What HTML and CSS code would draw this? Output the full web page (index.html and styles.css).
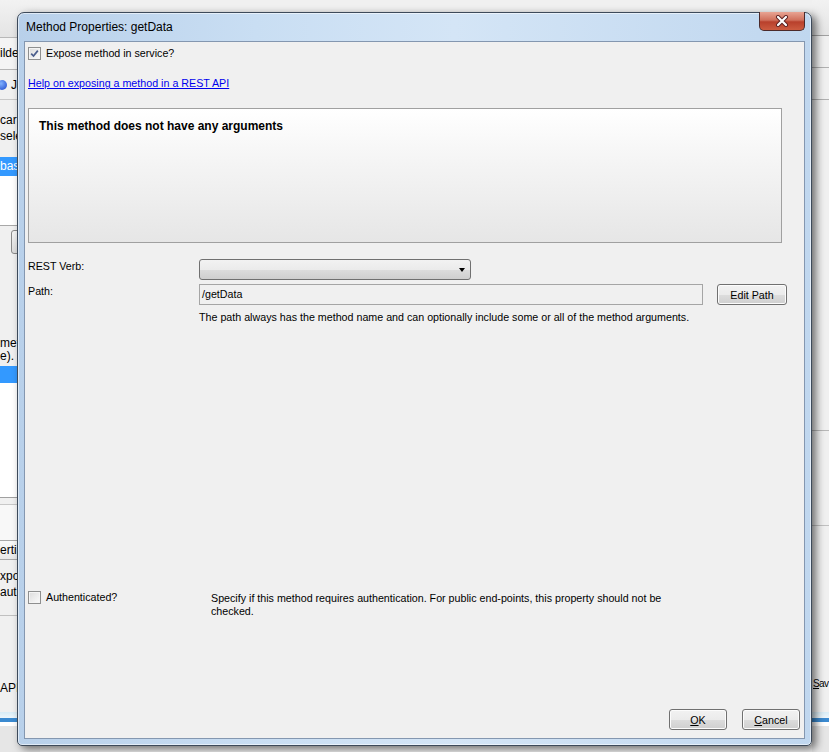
FILE: index.html
```html
<!DOCTYPE html>
<html>
<head>
  <title>Method Properties: getData</title>
  <link rel="stylesheet" href="styles.css">
</head>
<body>
  <div class="desk">
    <!-- main application window behind the dialog -->
    <div class="app">
      <div class="app-left">
        <div class="bg-row bg-head"></div>
        <div class="bg-row bg-tab">ilde</div>
        <div class="bg-row bg-radio"><span class="bg-dot"></span>JS</div>
        <div class="bg-row bg-text">car<br>sele</div>
        <div class="bg-row bg-sel">bas</div>
        <div class="bg-row bg-white"></div>
        <div class="bg-row bg-btn"><span class="bg-btn-edge"></span></div>
        <div class="bg-row bg-meth">meth<br>e).</div>
        <div class="bg-row bg-sel bg-sel2"></div>
        <div class="bg-row bg-white bg-white2"></div>
        <div class="bg-row bg-lines"></div>
        <div class="bg-row bg-hdr">erti</div>
        <div class="bg-row bg-expo">xpo<br>aut</div>
        <div class="bg-row bg-api">API</div>
        <div class="bg-row bg-bar"></div>
      </div>
      <div class="app-mid"></div>
      <div class="app-right">
        <div class="bg-row bg-rhead"></div>
        <div class="bg-row bg-rrow"></div>
        <div class="bg-row bg-rrow"></div>
        <div class="bg-row bg-rfill"></div>
        <div class="bg-row bg-sav"><u>S</u>av</div>
        <div class="bg-row bg-bar"></div>
      </div>
    </div>

    <!-- the dialog window -->
    <div class="dialog">
      <div class="titlebar">
        <span class="title">Method Properties: getData</span>
        <div class="close-btn">
          <svg width="16" height="12" viewBox="0 0 16 12">
            <path d="M4 2 L12 10 M12 2 L4 10" stroke="#5a2020" stroke-width="4" stroke-linecap="round"/>
            <path d="M4 2 L12 10 M12 2 L4 10" stroke="#ffffff" stroke-width="2.2" stroke-linecap="round"/>
          </svg>
        </div>
      </div>

      <div class="client">
        <div class="check-row expose">
          <span class="checkbox">
            <svg width="9" height="9" viewBox="0 0 9 9">
              <path d="M1.2 4.6 L3.5 7 L7.8 1.6" fill="none" stroke="#4a5d8c" stroke-width="1.7"/>
            </svg>
          </span>
          <span>Expose method in service?</span>
        </div>

        <a class="help-link" href="#">Help on exposing a method in a REST API</a>

        <div class="args-box">
          <b>This method does not have any arguments</b>
        </div>

        <div class="form-grid">
          <div class="label">REST Verb:</div>
          <div class="field">
            <div class="combo"><span class="combo-arrow"></span></div>
          </div>

          <div class="label">Path:</div>
          <div class="field path-field">
            <div class="text-input">/getData</div>
            <div class="btn edit-btn">Edit Path</div>
          </div>

          <div></div>
          <div class="hint">The path always has the method name and can optionally include some or all of the method arguments.</div>
        </div>

        <div class="auth-row">
          <div class="check-row auth-check">
            <span class="checkbox"></span>
            <span>Authenticated?</span>
          </div>
          <div class="auth-desc">Specify if this method requires authentication. For public end-points, this property should not be<br>checked.</div>
        </div>

        <div class="actions">
          <div class="btn action-btn"><u>O</u>K</div>
          <div class="btn action-btn"><u>C</u>ancel</div>
        </div>
      </div>
    </div>
  </div>
</body>
</html>
```

FILE: styles.css
```css
body {
  margin: 0;
  padding: 0;
  font-family: "Liberation Sans", Arial, sans-serif;
  font-size: 10.7px;
  color: #000;
  background-color: #ececec;
}

.desk {
  position: relative;
  width: 829px;
  height: 752px;
  overflow: hidden;
}

/* ---------- background application ---------- */

.app {
  display: flex;
  width: 829px;
  height: 752px;
  background-color: #f0f0f0;
}

.app-left {
  width: 40px;
  display: flex;
  flex-direction: column;
}

.app-mid {
  flex: 1;
}

.app-right {
  width: 17px;
  display: flex;
  flex-direction: column;
}

.bg-row {
  font-size: 12px;
  line-height: 16px;
  white-space: nowrap;
  overflow: hidden;
  box-sizing: border-box;
  flex-shrink: 0;
}

.bg-head {
  height: 38px;
  background: linear-gradient(#f2f2f2, #e4e4e4);
  border-bottom: 1px solid #b8b8b8;
}

.bg-tab {
  height: 32px;
  padding-top: 7px;
  background-color: #f4f4f4;
  border-bottom: 1px solid #b5b5b5;
}

.bg-radio {
  height: 30px;
  padding-top: 7px;
  display: flex;
  align-items: flex-start;
  border-bottom: 1px solid #c8c8c8;
}

.bg-dot {
  display: inline-block;
  width: 10px;
  height: 10px;
  margin: 3px 4px 0 -3px;
  border-radius: 50%;
  background: radial-gradient(circle at 40% 35%, #7fb0ff, #1a44c8);
}

.bg-text {
  height: 57px;
  padding-top: 12px;
}

.bg-sel {
  height: 19px;
  line-height: 18px;
  background-color: #3399ff;
  color: #fff;
}

.bg-white {
  height: 50px;
  background-color: #fff;
  border-bottom: 1px solid #a8a8a8;
}

.bg-btn {
  height: 104px;
  padding-top: 4px;
}

.bg-btn-edge {
  display: block;
  width: 14px;
  height: 22px;
  margin-left: 11px;
  border: 1px solid #8a8a8a;
  border-radius: 3px;
  background: linear-gradient(#f6f6f6, #dcdcdc);
}

.bg-meth {
  height: 36px;
  padding-top: 7px;
  line-height: 13px;
}

.bg-sel2 {
  height: 17px;
}

.bg-white2 {
  height: 115px;
  border-bottom: 1px solid #a0a0a0;
}

.bg-lines {
  height: 43px;
  border-bottom: 1px solid #a8a8a8;
  background: linear-gradient(#f0f0f0 6px, #c8c8c8 6px, #c8c8c8 7px, #f8f8f8 7px);
}

.bg-hdr {
  height: 19px;
  line-height: 18px;
  border-bottom: 1px solid #a8a8a8;
  background: linear-gradient(#fafafa, #e8e8e8);
}

.bg-expo {
  height: 56px;
  padding-top: 8px;
  border-bottom: 1px solid #c0c0c0;
}

.bg-api {
  height: 96px;
  padding-top: 64px;
}

.bg-bar {
  height: 40px;
  background: linear-gradient(#d8ecf6 0, #eef6fb 6px, #3b8ad0 6px, #3b8ad0 10px, #ffffff 10px, #ffffff 14px, #e6e6e6 14px);
}

.bg-rhead {
  height: 36px;
  background: linear-gradient(#f2f2f2, #e4e4e4);
  border-bottom: 1px solid #a0a0a0;
}

.bg-rrow {
  height: 32px;
  border-bottom: 1px solid #b0b0b0;
}

.bg-rfill {
  height: 572px;
  background: linear-gradient(#f0f0f0 330px, #b8b8b8 330px, #b8b8b8 331px, #f0f0f0 331px, #f0f0f0 425px, #c0c0c0 425px, #c0c0c0 426px, #f0f0f0 426px);
}

.bg-sav {
  height: 40px;
  padding-top: 4px;
  padding-left: 1px;
  font-size: 10px;
  letter-spacing: -0.6px;
}

/* ---------- dialog window ---------- */

.dialog {
  position: absolute;
  left: 17px;
  top: 12px;
  width: 795px;
  height: 734px;
  box-sizing: border-box;
  padding: 0 6px 6px 6px;
  display: flex;
  flex-direction: column;
  border: 1px solid #3d4a5a;
  border-radius: 7px 7px 5px 5px;
  background: linear-gradient(90deg, #b8d0ea 0%, #c9def3 30%, #d4e5f6 55%, #c0d7ef 100%);
  box-shadow: 4px 3px 9px rgba(0, 0, 0, 0.55), inset 0 0 0 1px rgba(255, 255, 255, 0.55);
}

.titlebar {
  height: 28px;
  display: flex;
  align-items: flex-start;
}

.title {
  font-size: 12px;
  line-height: 14px;
  margin-top: 7px;
  margin-left: 2px;
  color: #000;
}

.close-btn {
  margin-left: auto;
  margin-top: -1px;
  width: 46px;
  height: 19px;
  box-sizing: border-box;
  display: flex;
  align-items: center;
  justify-content: center;
  border: 1px solid #4b2a2a;
  border-top: none;
  border-radius: 0 0 5px 5px;
  background: linear-gradient(#e8a493 0%, #d0705c 45%, #b8402c 55%, #cc5c40 100%);
}

.client {
  flex: 1;
  display: flex;
  flex-direction: column;
  padding: 0 4px 8px 3px;
  background-color: #f0f0f0;
  border: 1px solid #8497b0;
}

.check-row {
  display: flex;
  align-items: center;
  gap: 5px;
  line-height: 13px;
}

.expose {
  margin-top: 5px;
}

.checkbox {
  width: 13px;
  height: 13px;
  box-sizing: border-box;
  display: flex;
  align-items: center;
  justify-content: center;
  border: 1px solid #8e8f8f;
  background: linear-gradient(135deg, #dcdcdc, #fbfbfb);
  box-shadow: inset 0 0 0 1px #f4f4f4;
}

.help-link {
  margin-top: 17px;
  align-self: flex-start;
  line-height: 13px;
  color: #0000ee;
  text-decoration: underline;
}

.args-box {
  margin-top: 18px;
  width: 754px;
  height: 135px;
  box-sizing: border-box;
  padding: 11px 10px;
  border: 1px solid #a0a0a0;
  background: linear-gradient(#ffffff 0%, #f7f7f7 30%, #e6e6e6 100%);
  font-size: 12px;
  line-height: 13px;
}

.form-grid {
  margin-top: 16px;
  display: grid;
  grid-template-columns: 171px 1fr;
  row-gap: 4px;
}

.label {
  padding-top: 1px;
  line-height: 13px;
}

.field {
  display: flex;
  align-items: center;
}

.combo {
  position: relative;
  width: 272px;
  height: 21px;
  box-sizing: border-box;
  border: 1px solid #707070;
  border-radius: 3px;
  background: linear-gradient(#f2f2f2 0%, #ebebeb 50%, #dddddd 51%, #cfcfcf 100%);
}

.combo-arrow {
  position: absolute;
  right: 5px;
  top: 8px;
  width: 0;
  height: 0;
  border-left: 3.5px solid transparent;
  border-right: 3.5px solid transparent;
  border-top: 4px solid #000;
}

.text-input {
  width: 504px;
  height: 21px;
  box-sizing: border-box;
  padding-left: 2px;
  line-height: 19px;
  border: 1px solid #a5a5a5;
  background-color: #f0f0f0;
}

.btn {
  height: 21px;
  box-sizing: border-box;
  display: flex;
  align-items: center;
  justify-content: center;
  border: 1px solid #707070;
  border-radius: 3px;
  background: linear-gradient(#f2f2f2 0%, #ebebeb 50%, #dddddd 51%, #cfcfcf 100%);
  box-shadow: inset 0 0 0 1px #fcfcfc;
}

.edit-btn {
  width: 70px;
  margin-left: 14px;
}

.hint {
  margin-top: 2px;
  line-height: 13px;
}

.auth-row {
  margin-top: 267px;
  display: flex;
  align-items: flex-start;
}

.auth-check {
  width: 183px;
}

.auth-desc {
  margin-top: 1px;
  line-height: 13px;
}

.actions {
  margin-top: auto;
  display: flex;
  justify-content: flex-end;
  gap: 15px;
}

.action-btn {
  width: 58px;
}
```
